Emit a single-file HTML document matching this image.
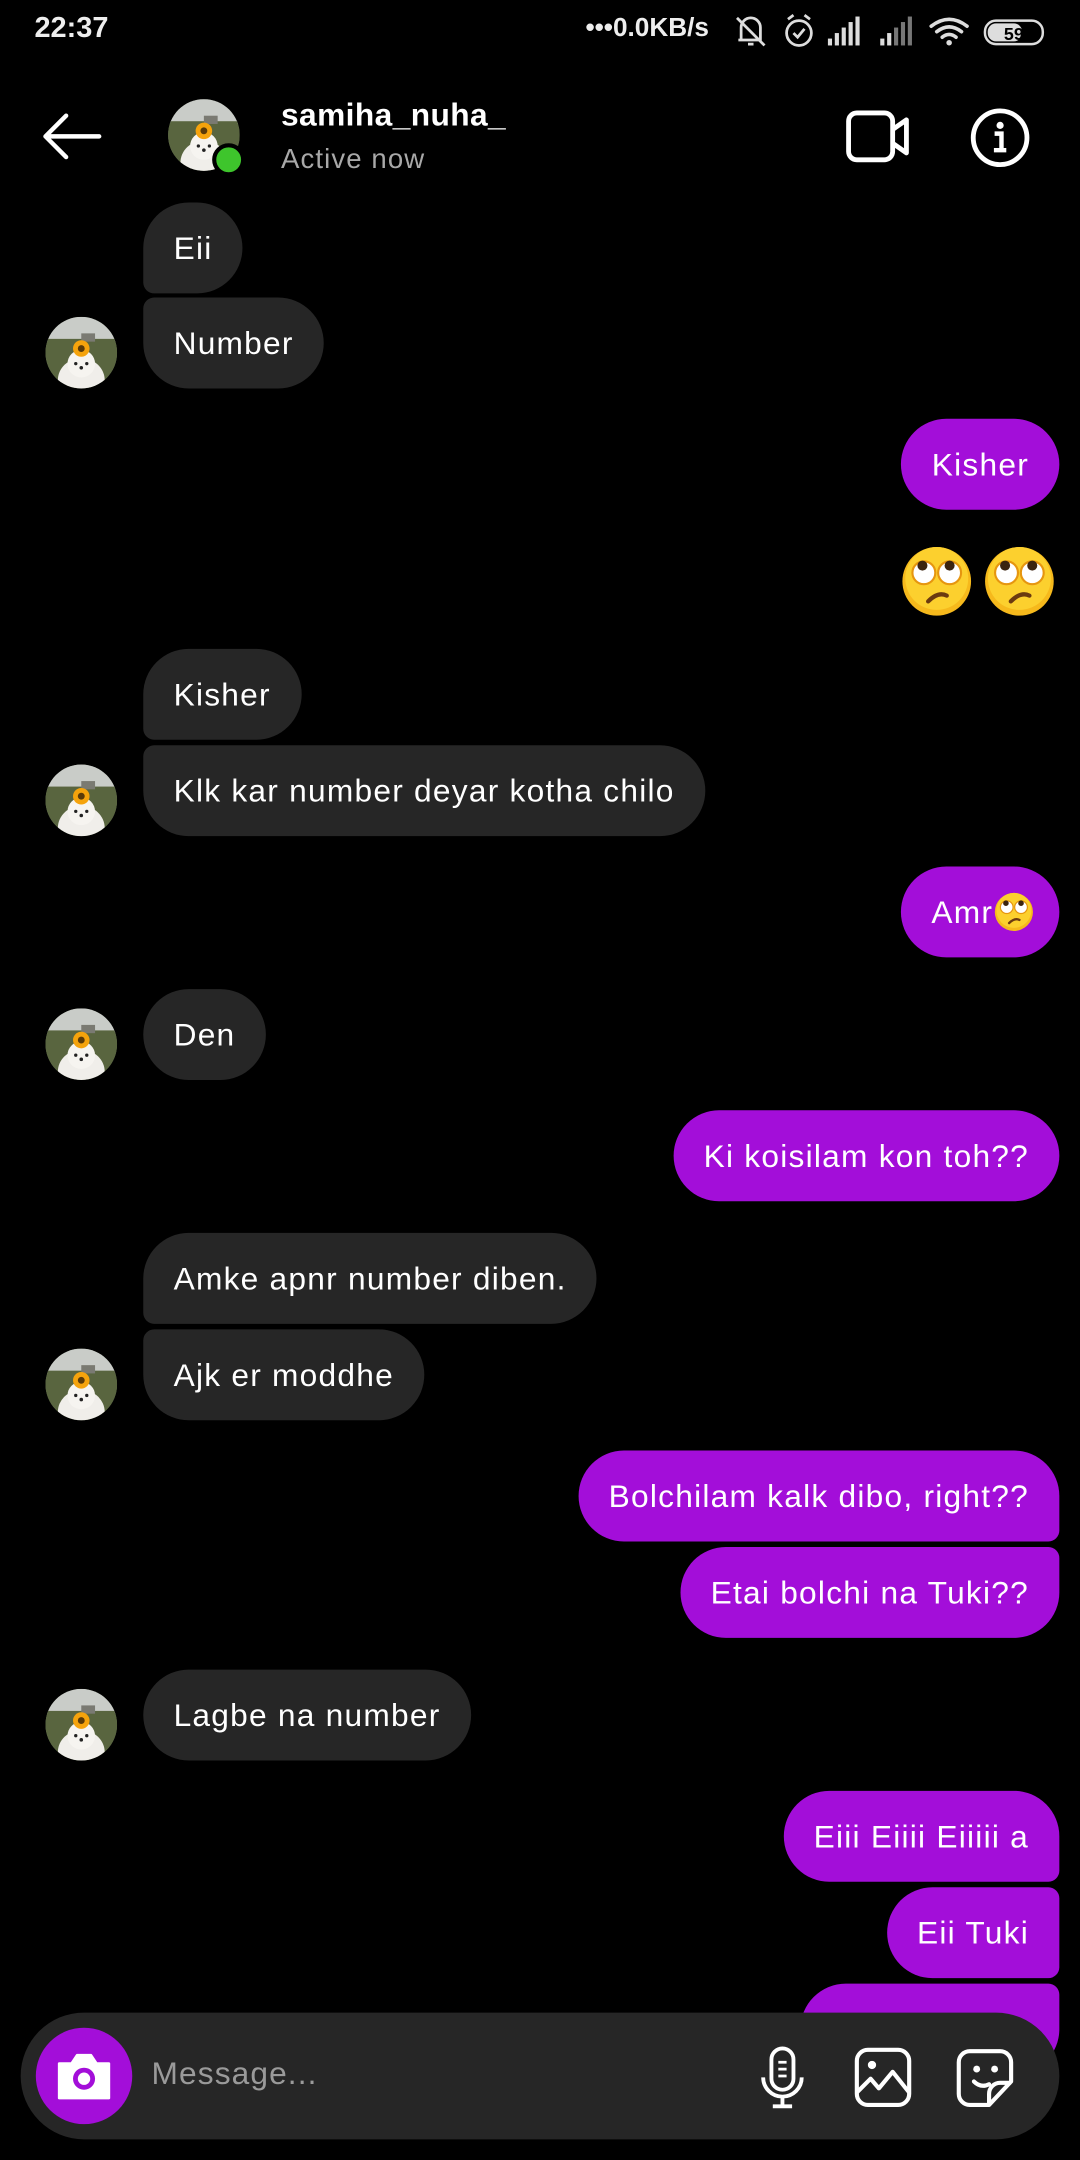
<!DOCTYPE html>
<html><head><meta charset="utf-8">
<style>
html,body{margin:0;padding:0;background:#000;width:1080px;height:2160px;overflow:hidden}
#w{position:absolute;left:0;top:0;width:784px;height:1568px;transform:scale(1.377551);transform-origin:0 0;font-family:"Liberation Sans",Arial,sans-serif;color:#fff}
.b{position:absolute;height:66px;line-height:66px;border-radius:33px;font-size:23px;letter-spacing:0.9px;padding:0 22px;box-sizing:border-box;white-space:nowrap}
.r{background:#262626;left:104px}
.s{background:#a30ed9;right:15px}
.av{position:absolute;left:33px;width:52px;height:52px}
.abs{position:absolute}
</style></head><body><div id="w">
<svg width="0" height="0" style="position:absolute">
<defs>
<symbol id="emo" viewBox="0 0 52 52">
<circle cx="26" cy="26" r="24" fill="#f6b91c"/><circle cx="26" cy="24" r="22" fill="#fcd02e"/>
<circle cx="17" cy="20" r="8" fill="#fff" stroke="#e6960f" stroke-width="1.5"/>
<circle cx="35" cy="20" r="8" fill="#fff" stroke="#e6960f" stroke-width="1.5"/>
<circle cx="16" cy="15" r="3.5" fill="#3b2410"/><circle cx="35" cy="15" r="3.5" fill="#3b2410"/>
<path d="M20 40 Q27 33 33 36" stroke="#6b3a10" stroke-width="3" fill="none" stroke-linecap="round"/>
</symbol>
<symbol id="avs" viewBox="0 0 52 52">
<clipPath id="cc"><circle cx="26" cy="26" r="26"/></clipPath>
<g clip-path="url(#cc)">
<rect width="52" height="52" fill="#6d7560"/>
<rect width="52" height="18" fill="#c9ccc8"/>
<rect x="0" y="16" width="52" height="36" fill="#59653f"/>
<rect x="26" y="12" width="10" height="6" fill="#7a7a72"/>
<ellipse cx="26" cy="46" rx="17" ry="16" fill="#f0eeea"/>
<circle cx="26" cy="34" r="10" fill="#f6f4f0"/>
<circle cx="26" cy="23" r="6" fill="#f5a30c"/><circle cx="26" cy="23" r="2.5" fill="#5a3a08"/>
<circle cx="22" cy="34" r="1.2" fill="#222"/><circle cx="30" cy="34" r="1.2" fill="#222"/><circle cx="26" cy="37" r="1.3" fill="#222"/>
</g>
</symbol>
</defs></svg>

<!-- status bar -->
<div class="abs" style="left:25px;top:9px;font-size:21px;font-weight:bold;color:#eee">22:37</div>
<div class="abs" style="left:425px;top:10px;font-size:19px;font-weight:bold;color:#eee">•••0.0KB/s</div>
<svg class="abs" style="left:533px;top:9px" width="230" height="28" viewBox="0 0 230 28">
<g stroke="#ddd" stroke-width="2" fill="none">
<path d="M5 20 V11 a7 7 0 0 1 14 0 V20 H3 M10 23 h4 M2 4 L22 24"/>
<circle cx="47" cy="15" r="9"/><path d="M43 15 l3 3 l5 -6 M39 5 l4 -3 M55 5 l-4 -3"/>
</g>
<g fill="#ddd"><rect x="68" y="19" width="3" height="5"/><rect x="73" y="15" width="3" height="9"/><rect x="78" y="11" width="3" height="13"/><rect x="83" y="7" width="3" height="17"/><rect x="88" y="3" width="3" height="21"/>
<rect x="106" y="19" width="3" height="5"/><rect x="111" y="15" width="3" height="9"/><rect x="116" y="11" width="3" height="13" fill="#777"/><rect x="121" y="7" width="3" height="17" fill="#777"/><rect x="126" y="3" width="3" height="21" fill="#777"/></g>
<g stroke="#ddd" stroke-width="2.6" fill="none" stroke-linecap="round"><path d="M143 10 q13 -10 26 0"/><path d="M147 14 q9 -7 18 0"/><path d="M151 18 q5 -4 10 0"/></g><circle cx="156" cy="22" r="2" fill="#ddd"/>
<rect x="182" y="6" width="42" height="17" rx="8" fill="none" stroke="#ddd" stroke-width="1.8"/><rect x="184" y="8" width="25" height="13" rx="6" fill="#ddd"/>
<text x="203" y="20" font-size="13" font-weight="bold" fill="#000" text-anchor="middle" font-family="Liberation Sans">59</text>
</svg>

<!-- header -->
<svg class="abs" style="left:30px;top:82px" width="44" height="34" viewBox="0 0 44 34"><path d="M42 17 H4 M18 2 L3 17 L18 32" stroke="#fff" stroke-width="3.2" fill="none" stroke-linecap="round" stroke-linejoin="round"/></svg>
<svg class="abs" style="left:122px;top:72px" width="52" height="52"><use href="#avs"/></svg>
<div class="abs" style="left:154px;top:104px;width:18px;height:18px;border-radius:50%;background:#3ec52c;border:3px solid #000"></div>
<div class="abs" style="left:204px;top:70px;font-size:23px;font-weight:bold;letter-spacing:0.3px">samiha_nuha_</div>
<div class="abs" style="left:204px;top:105px;font-size:20px;color:#a8a8a8;letter-spacing:0.8px">Active now</div>
<svg class="abs" style="left:612px;top:78px" width="52" height="42" viewBox="0 0 52 42"><rect x="4" y="4" width="32" height="34" rx="6" stroke="#fff" stroke-width="3.5" fill="none"/><path d="M36 16 L46 9 V33 L36 26" stroke="#fff" stroke-width="3.5" fill="none" stroke-linejoin="round"/></svg>
<svg class="abs" style="left:703px;top:77px" width="46" height="46" viewBox="0 0 46 46"><circle cx="23" cy="23" r="19.5" stroke="#fff" stroke-width="3.5" fill="none"/><circle cx="23" cy="14" r="2.6" fill="#fff"/><path d="M19 20 h5 v12 M18.5 32 h9" stroke="#fff" stroke-width="3.2" fill="none"/></svg>

<!-- messages -->
<div class="b r" style="top:147px;border-bottom-left-radius:8px">Eii</div>
<div class="b r" style="top:216px;border-top-left-radius:8px">Number</div>
<svg class="av" style="top:230px"><use href="#avs"/></svg>

<div class="b s" style="top:304px">Kisher</div>
<svg class="abs" style="left:652px;top:395px" width="56" height="54" viewBox="0 0 52 52"><use href="#emo"/></svg>
<svg class="abs" style="left:712px;top:395px" width="56" height="54" viewBox="0 0 52 52"><use href="#emo"/></svg>

<div class="b r" style="top:471px;border-bottom-left-radius:8px">Kisher</div>
<div class="b r" style="top:541px;border-top-left-radius:8px">Klk kar number deyar kotha chilo</div>
<svg class="av" style="top:555px"><use href="#avs"/></svg>

<div class="b s" style="top:629px;padding-right:18px">Amr<svg width="30" height="30" viewBox="0 0 52 52" style="vertical-align:-7px"><use href="#emo"/></svg></div>

<div class="b r" style="top:718px">Den</div>
<svg class="av" style="top:732px"><use href="#avs"/></svg>

<div class="b s" style="top:806px">Ki koisilam kon toh??</div>

<div class="b r" style="top:895px;border-bottom-left-radius:8px">Amke apnr number diben.</div>
<div class="b r" style="top:965px;border-top-left-radius:8px">Ajk er moddhe</div>
<svg class="av" style="top:979px"><use href="#avs"/></svg>

<div class="b s" style="top:1053px;border-bottom-right-radius:8px">Bolchilam kalk dibo, right??</div>
<div class="b s" style="top:1123px;border-top-right-radius:8px">Etai bolchi na Tuki??</div>

<div class="b r" style="top:1212px">Lagbe na number</div>
<svg class="av" style="top:1226px"><use href="#avs"/></svg>

<div class="b s" style="top:1300px;border-bottom-right-radius:8px">Eiii Eiiii Eiiiii a</div>
<div class="b s" style="top:1370px;border-radius:33px 8px 8px 33px">Eii Tuki</div>
<div class="b s" style="top:1440px;border-top-right-radius:8px;width:188px">&nbsp;</div>

<!-- input bar -->
<div class="abs" style="left:15px;top:1461px;width:754px;height:92px;border-radius:46px;background:#262626"></div>
<div class="abs" style="left:26px;top:1472px;width:70px;height:70px;border-radius:50%;background:#a30ed9"></div>
<svg class="abs" style="left:39px;top:1487px" width="44" height="40" viewBox="0 0 44 40"><path d="M4 11 h9 l4 -6 h10 l4 6 h9 v25 h-36 z" fill="#fff" stroke="#fff" stroke-width="2" stroke-linejoin="round"/><circle cx="22" cy="22" r="8" fill="#a30ed9"/><circle cx="22" cy="22" r="4.5" fill="#fff"/></svg>
<div class="abs" style="left:110px;top:1492px;font-size:23px;color:#9a9a9a;letter-spacing:0.8px">Message...</div>
<svg class="abs" style="left:548px;top:1484px" width="40" height="48" viewBox="0 0 40 48"><rect x="12" y="3" width="16" height="30" rx="8" stroke="#fff" stroke-width="2.8" fill="none"/><path d="M6 24 a14 14 0 0 0 28 0 M20 38 v6 M13 45 h14" stroke="#fff" stroke-width="2.8" fill="none"/><path d="M17 13 h6 M17 18 h6 M17 23 h6" stroke="#fff" stroke-width="2"/></svg>
<svg class="abs" style="left:618px;top:1485px" width="46" height="46" viewBox="0 0 46 46"><rect x="4" y="3" width="38" height="40" rx="8" stroke="#fff" stroke-width="3" fill="none"/><circle cx="15" cy="14" r="3" fill="#fff"/><path d="M4 34 L14 24 L20 31 L30 19 L42 34" stroke="#fff" stroke-width="3" fill="none" stroke-linejoin="round"/></svg>
<svg class="abs" style="left:692px;top:1485px" width="46" height="46" viewBox="0 0 46 46"><path d="M42 26 V12 a8 8 0 0 0 -8 -8 H12 a8 8 0 0 0 -8 8 v23 a8 8 0 0 0 8 8 h14 z M26 43 v-8 a8 8 0 0 1 8 -8 h8" stroke="#fff" stroke-width="3" fill="none" stroke-linejoin="round"/><circle cx="17" cy="17" r="2.5" fill="#fff"/><circle cx="30" cy="17" r="2.5" fill="#fff"/><path d="M15 26 q5 5 11 2" stroke="#fff" stroke-width="3" fill="none" stroke-linecap="round"/></svg>
</div></body></html>
